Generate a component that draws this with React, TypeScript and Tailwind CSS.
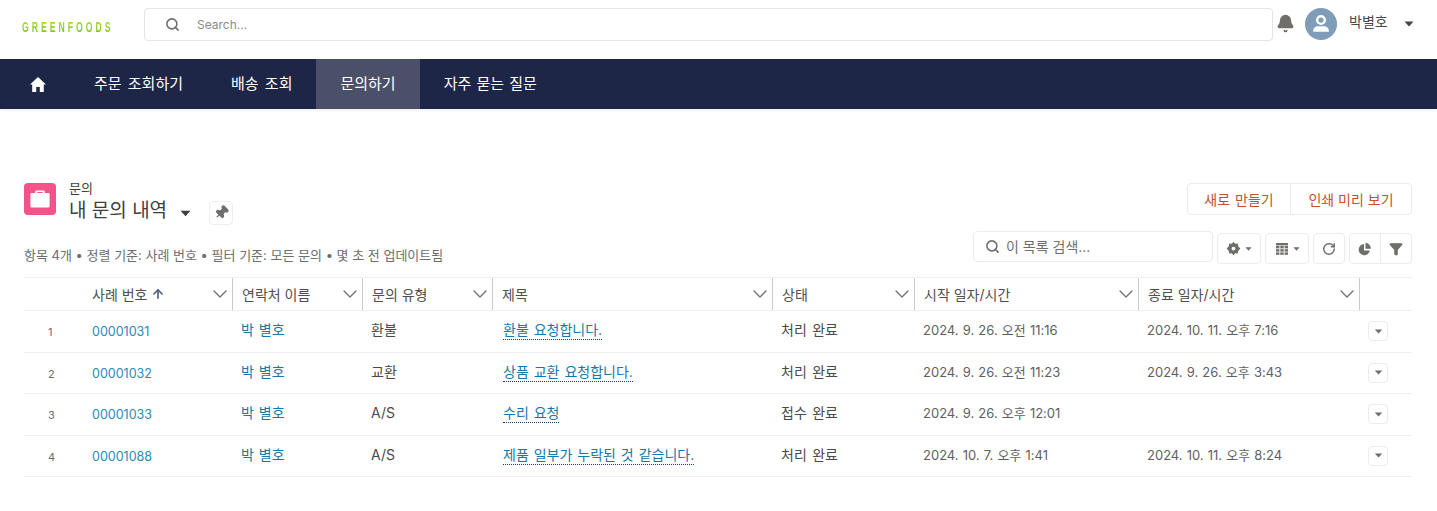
import { Search, Bell, ChevronDown, ArrowUp, Pin, RotateCw, Filter } from "lucide-react";

const rows = [
  { no: 1, id: "00001031", type: "환불", title: "환불 요청합니다.", status: "처리 완료", start: "2024. 9. 26. 오전 11:16", end: "2024. 10. 11. 오후 7:16" },
  { no: 2, id: "00001032", type: "교환", title: "상품 교환 요청합니다.", status: "처리 완료", start: "2024. 9. 26. 오전 11:23", end: "2024. 9. 26. 오후 3:43" },
  { no: 3, id: "00001033", type: "A/S", title: "수리 요청", status: "접수 완료", start: "2024. 9. 26. 오후 12:01", end: "" },
  { no: 4, id: "00001088", type: "A/S", title: "제품 일부가 누락된 것 같습니다.", status: "처리 완료", start: "2024. 10. 7. 오후 1:41", end: "2024. 10. 11. 오후 8:24" },
];

const columns = [
  { label: "사례 번호", width: "w-[148px]", sorted: true },
  { label: "연락처 이름", width: "w-[130px]" },
  { label: "문의 유형", width: "w-[130px]" },
  { label: "제목", width: "w-[280px]" },
  { label: "상태", width: "w-[142px]" },
  { label: "시작 일자/시간", width: "w-[224px]" },
  { label: "종료 일자/시간", width: "w-[221px]" },
];

const navItems = [
  { label: "주문 조회하기", className: "[word-spacing:2px]" },
  { label: "배송 조회", className: "[word-spacing:2px]" },
  { label: "문의하기", className: "bg-[#4a5068]" },
  { label: "자주 묻는 질문", className: "[word-spacing:1px]" },
];

function Caret({ className }: { className: string }) {
  return (
    <svg viewBox="0 0 10 6" className={className} fill="currentColor">
      <path d="M0.5 0.5h9L5 5.5z" />
    </svg>
  );
}

function HomeIcon() {
  return (
    <svg viewBox="0 0 16 15" className="w-[16px] h-[15px] text-white" fill="currentColor">
      <path d="M8 0L0 7.500h2.200V15h4V10h3.600v5h4V7.500H16z" />
    </svg>
  );
}

function GearIcon() {
  return (
    <svg viewBox="0 0 24 24" className="w-[15px] h-[15px] text-[#706e6b]" fill="currentColor">
      <path fillRule="evenodd" d="M12 1l2.600 3.500 4.300-.6.6 4.300L23 12l-3.500 3.800-.6 4.300-4.300-.6L12 23l-2.600-3.500-4.300.6-.6-4.300L1 12l3.500-3.800.6-4.300 4.300.6zM12 9a3 3 0 100 6 3 3 0 000-6z" />
    </svg>
  );
}

function TableIcon() {
  return (
    <svg viewBox="0 0 14 14" className="w-[14px] h-[14px] text-[#706e6b]" fill="currentColor">
      <rect x="1" y="1" width="12" height="2.400" />
      <rect x="1" y="4" width="3.400" height="2.400" />
      <rect x="5.300" y="4" width="3.400" height="2.400" />
      <rect x="9.600" y="4" width="3.400" height="2.400" />
      <rect x="1" y="7.200" width="3.400" height="2.400" />
      <rect x="5.300" y="7.200" width="3.400" height="2.400" />
      <rect x="9.600" y="7.200" width="3.400" height="2.400" />
      <rect x="1" y="10.400" width="3.400" height="2.400" />
      <rect x="5.300" y="10.400" width="3.400" height="2.400" />
      <rect x="9.600" y="10.400" width="3.400" height="2.400" />
    </svg>
  );
}

function PieIcon() {
  return (
    <svg viewBox="0 0 14 14" className="w-[14px] h-[14px] text-[#706e6b]" fill="currentColor">
      <path d="M6 2a5.600 5.600 0 105.800 6.400H6z" />
      <path d="M7.500 0.800a5.800 5.800 0 015.400 6H7.500z" />
    </svg>
  );
}

export default function App() {
  return (
    <div className="w-[1437px] h-[511px] overflow-hidden bg-white font-['Inter','Noto_Sans_CJK_KR',sans-serif] text-[14px] text-[#4a4a4a]">
      {/* Top bar */}
      <header className="h-[59px] flex items-start">
        <div className="w-[144px] pl-[22px] pt-[16px] shrink-0">
          <span className="inline-block origin-left scale-x-[0.62] font-['Liberation_Sans',sans-serif] font-bold text-[14px] leading-[16px] tracking-[4.800px] bg-gradient-to-b from-[#b0e02a] to-[#74c01a] bg-clip-text text-transparent">
            GREENFOODS
          </span>
        </div>
        <div className="mt-[8px] w-[1129px] h-[33px] border border-[#e5e5e5] rounded flex items-center shrink-0">
          <Search className="ml-[20px] w-[15px] h-[15px] text-[#706e6b]" strokeWidth={2.5} />
          <span className="ml-[17px] text-[12px] text-[#8a8a8a]">Search...</span>
        </div>
        <Bell className="mt-[14px] ml-[3px] w-[19px] h-[19px] text-[#706e6b]" fill="currentColor" />
        <div className="mt-[8px] ml-[10px] w-[32px] h-[32px] rounded-full bg-[#7f9db9] flex items-center justify-center shrink-0">
          <svg viewBox="0 0 20 20" className="w-[24px] h-[24px] text-white" fill="currentColor">
            <path fillRule="evenodd" d="M10 2.500a4.200 4.200 0 110 8.400a4.200 4.200 0 010-8.400zm0 2a2.200 2.200 0 100 4.400a2.200 2.200 0 000-4.400z" />
            <path d="M3.500 15.200c0-2 2-3.400 3.800-3.400h5.400c1.800 0 3.800 1.400 3.800 3.400v1.300H3.500z" />
          </svg>
        </div>
        <span className="mt-[13px] ml-[12px] text-[14px] leading-[18px] text-[#4a4a4a]">박별호</span>
        <Caret className="mt-[21px] ml-[16px] w-[10px] h-[6px] text-[#444]" />
      </header>

      {/* Nav */}
      <nav className="h-[50px] bg-[#1e2647] flex items-stretch shadow-[0_2px_3px_rgba(0,0,0,0.06)]">
        <div className="w-[70px] pl-[6px] flex items-center justify-center">
          <HomeIcon />
        </div>
        {navItems.map((item) => (
          <div key={item.label} className={`px-[24px] pt-[1px] flex items-center text-[15px] text-white ${item.className}`}>
            {item.label}
          </div>
        ))}
      </nav>

      <main className="pl-[24px] pr-[25px] pt-[74px]">
        {/* Page header */}
        <div className="flex justify-between h-[48px]">
          <div className="flex">
            <div className="w-[32px] h-[32px] rounded bg-[#f4538a] flex items-center justify-center">
              <svg viewBox="0 0 20 20" className="w-[24px] h-[24px] text-white" fill="currentColor">
                <path d="M7 3h6a1 1 0 011 1v1h3a1 1 0 011 1v10a1 1 0 01-1 1H3a1 1 0 01-1-1V6a1 1 0 011-1h3V4a1 1 0 011-1zm.800 1.200V5h4.400v-.8z" />
              </svg>
            </div>
            <div className="ml-[13px] -mt-[3px]">
              <div className="text-[13px] leading-[16px] text-[#3e3e3c]">문의</div>
              <div className="flex items-center h-[24px] mt-[3px]">
                <span className="text-[19px] leading-[24px] text-[#3e3e3c]">내 문의 내역</span>
                <Caret className="ml-[13px] mt-[5px] w-[11px] h-[7px] text-[#3e3e3c]" />
                <div className="ml-[18px] mt-[3px] w-[24px] h-[24px] border border-[#eeeeee] rounded flex items-center justify-center">
                  <Pin className="w-[15px] h-[15px] rotate-45 text-[#706e6b]" fill="currentColor" />
                </div>
              </div>
            </div>
          </div>
          <div className="flex h-[32px] border border-[#ececec] rounded text-[14px] text-[#c2512f]">
            <div className="w-[103px] flex items-center justify-center border-r border-[#ececec] [word-spacing:1px]">새로 만들기</div>
            <div className="w-[120px] flex items-center justify-center">인쇄 미리 보기</div>
          </div>
        </div>

        {/* List controls */}
        <div className="flex justify-between items-start">
          <div className="pt-[15px] text-[13px] leading-[18px] text-[#6b6d70]">
            항목 4개 • 정렬 기준: 사례 번호 • 필터 기준: 모든 문의 • 몇 초 전 업데이트됨
          </div>
          <div className="flex">
            <div className="w-[240px] h-[31px] border border-[#ececec] rounded flex items-center">
              <Search className="ml-[11px] w-[15px] h-[15px] text-[#706e6b]" strokeWidth={2.5} />
              <span className="ml-[6px] text-[14px] text-[#706e6b]">이 목록 검색...</span>
            </div>
            <div className="ml-[4px] mt-[2px] w-[44px] h-[31px] border border-[#ececec] rounded flex items-center justify-center gap-[4px]">
              <GearIcon />
              <Caret className="w-[7px] h-[4px] text-[#706e6b]" />
            </div>
            <div className="ml-[4px] mt-[2px] w-[44px] h-[31px] border border-[#ececec] rounded flex items-center justify-center gap-[4px]">
              <TableIcon />
              <Caret className="w-[7px] h-[4px] text-[#706e6b]" />
            </div>
            <div className="ml-[4px] mt-[2px] w-[32px] h-[31px] border border-[#ececec] rounded flex items-center justify-center">
              <RotateCw className="w-[14px] h-[14px] text-[#706e6b]" strokeWidth={2.5} />
            </div>
            <div className="ml-[4px] mt-[2px] flex h-[31px] border border-[#ececec] rounded">
              <div className="w-[31px] flex items-center justify-center border-r border-[#ececec]">
                <PieIcon />
              </div>
              <div className="w-[30px] flex items-center justify-center">
                <Filter className="w-[14px] h-[14px] text-[#706e6b]" fill="currentColor" />
              </div>
            </div>
          </div>
        </div>

        {/* Table */}
        <table className="mt-[13px] w-[1388px] table-fixed border-collapse">
          <thead>
            <tr className="h-[33px] border-t border-b border-[#f0f0f0]">
              <th className="w-[61px]" />
              {columns.map((col) => (
                <th key={col.label} className={`${col.width} p-0 font-normal text-left`}>
                  <div className={`h-[32px] flex items-center justify-between border-r border-[#c9c9c9] ${col.sorted ? "pl-[7px]" : "pl-[9px]"}`}>
                    <span className="flex items-center text-[14px] text-[#514f4d]">
                      {col.label}
                      {col.sorted && <ArrowUp className="ml-[4px] w-[14px] h-[14px] text-[#54698d]" strokeWidth={3} />}
                    </span>
                    <ChevronDown className="w-[24px] h-[24px] text-[#706e6b]" strokeWidth={1.25} />
                  </div>
                </th>
              ))}
              <th />
            </tr>
          </thead>
          <tbody>
            {rows.map((row) => (
              <tr key={row.no} className="h-[41.500px] border-b border-[#f0f0f0]">
                <td className="pl-[24px] pt-[2px] text-[11px] text-[#6b6d70]">{row.no}</td>
                <td className="pl-[7px] pt-[3px] text-[12.500px] text-[#2a8ab8]">{row.id}</td>
                <td className="pl-[8px] pb-[3px] [word-spacing:1px] text-[#1478a8]">박 별호</td>
                <td className="pl-[8px] pb-[3px] text-[#4a4a4a]">{row.type}</td>
                <td className="pl-[10px] pb-[3px]">
                  <span className="text-[#1478a8] pb-[1px] [word-spacing:1px] border-b border-dotted border-[#1e3a5f]">{row.title}</span>
                </td>
                <td className="pl-[8px] pb-[3px] [word-spacing:1.500px] text-[#4a4a4a]">{row.status}</td>
                <td className="pl-[8px] pb-[1px] text-[13px] [word-spacing:0.500px] text-[#5f5f5f]">{row.start}</td>
                <td className="pl-[8px] pb-[1px] text-[13px] [word-spacing:0.500px] text-[#5f5f5f]">{row.end}</td>
                <td className="pl-[8px]">
                  <div className="w-[20px] h-[20px] border border-[#ececec] rounded flex items-center justify-center">
                    <Caret className="w-[9px] h-[5px] text-[#706e6b]" />
                  </div>
                </td>
              </tr>
            ))}
          </tbody>
        </table>
      </main>
    </div>
  );
}
